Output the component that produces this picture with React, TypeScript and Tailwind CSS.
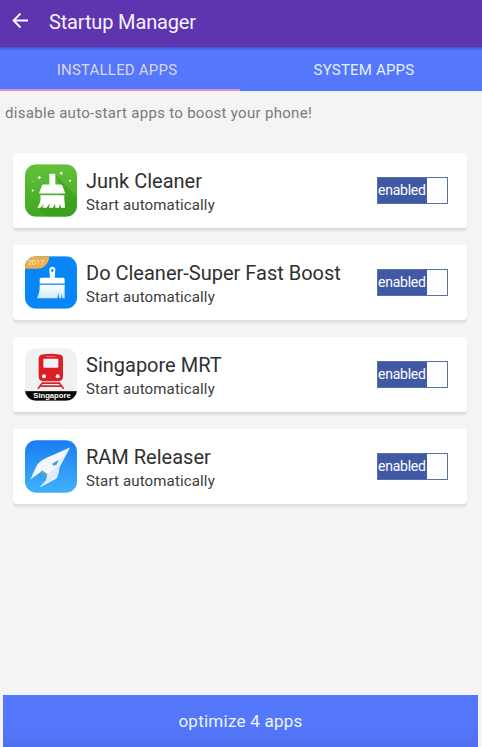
import { useState } from 'react'
import type { ReactNode } from 'react'

interface AppEntry {
  id: string
  name: string
  icon: ReactNode
}

const JunkCleanerIcon = () => (
  <svg viewBox="0 0 156 158" className="mb-px h-[53px] w-13 shrink-0">
    <defs>
      <linearGradient id="junk-bg" x1="0" y1="0" x2="0" y2="1">
        <stop offset="0" stopColor="#65c13a" />
        <stop offset="1" stopColor="#3fa71e" />
      </linearGradient>
      <clipPath id="junk-clip">
        <rect width="156" height="158" rx="34" />
      </clipPath>
    </defs>
    <g clipPath="url(#junk-clip)">
      <rect width="156" height="158" fill="url(#junk-bg)" />
      <path d="M90 31 156 98v60H66L40 131l72-43Z" fill="#2f9018" opacity=".4" />
    </g>
    <g fill="#fff">
      <rect x="73" y="29" width="18" height="35" rx="3" />
      <path d="M56 61h51q5 0 6 5l8 22H42l8-22q1-5 6-5Z" />
      <path d="M46 93h72c-1 13 2 25 2 38h-12l-2-12-4 12H91l-1-12-6 12H72l2-13-9 13H52l5-12-11 12h-9c6-11 12-21 9-38Z" />
      <path d="m43 34 2 4 4 2-4 2-2 4-2-4-4-2 4-2Zm66-13 2 4 4 2-4 2-2 4-2-4-4-2 4-2Z" />
      <circle cx="24" cy="51" r="2" opacity=".6" />
      <circle cx="135" cy="50" r="3" />
      <circle cx="23" cy="79" r="3" />
    </g>
  </svg>
)

const DoCleanerIcon = () => (
  <svg viewBox="0 0 156 158" className="mb-px h-[53px] w-13 shrink-0">
    <defs>
      <linearGradient id="brush-fill" x1="0" y1="0" x2="0" y2="1">
        <stop offset="0" stopColor="#fff" />
        <stop offset="1" stopColor="#cbeafb" />
      </linearGradient>
      <clipPath id="brush-clip">
        <rect width="156" height="158" rx="34" />
      </clipPath>
    </defs>
    <g clipPath="url(#brush-clip)">
      <rect width="156" height="158" fill="#0787f7" />
      <path d="M0 0h73c-2 23-14 37-38 38H0Z" fill="#f0ad49" />
    </g>
    <path
      fillRule="evenodd"
      d="M73 41c0-12 18-12 18 0l-2 24h25q5 0 5 5v12H44V70q0-5 5-5h26ZM82 39a4 4 0 1 0 0 8 4 4 0 0 0 0-8Z"
      fill="#fff"
    />
    <path
      d="M44 86h75v40h-7l-1-13-3 13h-6l-1-16-4 16H36c6-11 9-24 8-40Z"
      fill="url(#brush-fill)"
    />
    <text
      x="9"
      y="28"
      fontSize="22"
      fill="#fdf0d2"
      textLength="49"
      lengthAdjust="spacingAndGlyphs"
      fontFamily="Roboto, sans-serif"
    >
      2017
    </text>
  </svg>
)

const SingaporeMrtIcon = () => (
  <svg viewBox="0 0 156 158" className="mb-px h-[53px] w-13 shrink-0">
    <defs>
      <clipPath id="mrt-clip">
        <rect width="156" height="158" rx="34" />
      </clipPath>
    </defs>
    <g clipPath="url(#mrt-clip)">
      <rect width="156" height="158" fill="#f1f1f1" />
      <rect y="129" width="156" height="29" fill="#050505" />
    </g>
    <path d="M41 30q1-10 12-11 25-5 50 0 10 1 11 11v56q-1 13-13 13H54q-12 0-13-13Z" fill="#da1f26" />
    <path d="M64 25h27" stroke="#e6777b" strokeWidth="3" />
    <rect x="55" y="32" width="45" height="27" rx="3" fill="#f4f4f4" />
    <circle cx="57" cy="84" r="6" fill="#fff" />
    <circle cx="98" cy="84" r="6" fill="#fff" />
    <path d="M52 105h52M48 114h60M54 102l-15 20M101 102l15 20" stroke="#cf2a30" strokeWidth="5" />
    <text
      x="25"
      y="149"
      fontSize="21"
      fontWeight="700"
      fill="#fff"
      textLength="112"
      lengthAdjust="spacingAndGlyphs"
      fontFamily="'Liberation Sans', sans-serif"
    >
      Singapore
    </text>
  </svg>
)

const RamReleaserIcon = () => (
  <svg viewBox="0 0 156 158" className="mb-px h-[53px] w-13 shrink-0">
    <defs>
      <linearGradient id="ram-bg" x1="0" y1="0" x2="0" y2="1">
        <stop offset="0" stopColor="#1a7df0" />
        <stop offset="1" stopColor="#3fb2fb" />
      </linearGradient>
    </defs>
    <rect width="156" height="158" rx="34" fill="url(#ram-bg)" />
    <path d="M135 22 65 53Q42 62 34 79L16 118l33-24 17 13-3 14-20 21 51-27q6-8 9-33Z" fill="#f1f7fd" />
    <path d="M135 22 103 82q-3 25-9 33l-51 27 20-21 5-16 20-19Z" fill="#dfebf8" />
    <path d="m82 71 19-12-6 15-11 3Z" fill="#3a9ee0" />
    <path d="m51 90 17 12-4 7-18-13Z" fill="#6aa5bd" />
  </svg>
)

const ENTRIES: AppEntry[] = [
  { id: 'junk', name: 'Junk Cleaner', icon: <JunkCleanerIcon /> },
  { id: 'do', name: 'Do Cleaner-Super Fast Boost', icon: <DoCleanerIcon /> },
  { id: 'mrt', name: 'Singapore MRT', icon: <SingaporeMrtIcon /> },
  { id: 'ram', name: 'RAM Releaser', icon: <RamReleaserIcon /> },
]

interface AppCardProps {
  entry: AppEntry
  enabled: boolean
  onToggle: () => void
}

const AppCard = ({ entry, enabled, onToggle }: AppCardProps) => (
  <li className="flex h-[75px] items-center rounded-[4px] bg-white pr-[19px] pl-3 shadow-[0_3px_2px_rgba(0,0,0,0.09)]">
    {entry.icon}
    <div className="ml-[9px] min-w-0 flex-1 pt-1">
      <div className="text-[20px] leading-6 whitespace-nowrap text-[#303030]">{entry.name}</div>
      <div className="text-[15px] leading-6 tracking-[0.15px] text-[#3c3c3c]">Start automatically</div>
    </div>
    <button
      onClick={onToggle}
      className="flex h-[27px] w-[71px] shrink-0 border border-[#5870ad] bg-white text-[14px] leading-[25px] tracking-[-0.25px]"
    >
      {enabled ? (
        <span className="h-full w-[49px] bg-[#3f59a5] text-left whitespace-nowrap text-white">enabled</span>
      ) : (
        <span className="ml-auto h-full w-[52px] bg-gray-400 text-center text-white">disabled</span>
      )}
    </button>
  </li>
)

export default function App() {
  const [tab, setTab] = useState<'installed' | 'system'>('installed')
  const [disabled, setDisabled] = useState<string[]>([])

  const toggle = (id: string) =>
    setDisabled((prev) => (prev.includes(id) ? prev.filter((x) => x !== id) : [...prev, id]))

  return (
    <div className="flex h-[747px] w-[482px] flex-col overflow-hidden bg-[#f4f4f4] font-[Roboto,sans-serif]">
      <header className="flex h-[47px] shrink-0 items-center bg-[#5e35ae] pb-[5px] pl-3">
        <button aria-label="Back">
          <svg viewBox="0 0 17 17" className="h-[17px] w-[17px]" fill="none" stroke="#fff" strokeWidth="1.8">
            <path d="M16 7.5H1.5M8.5 0.5 1.5 7.5 8.5 14.5" />
          </svg>
        </button>
        <h1 className="ml-5 pt-0.5 text-[20px] tracking-[-0.15px] text-[#f7f2fc]">Startup Manager</h1>
      </header>

      <nav className="flex h-11 shrink-0 bg-[#5477fb] text-[15px] tracking-[0.2px] shadow-[inset_0_4px_3px_-3px_rgba(50,40,140,0.6)]">
        <button
          onClick={() => setTab('installed')}
          className={`w-[240px] border-b-2 pt-1 pr-1.5 ${tab === 'installed' ? 'border-[#d88fd8] text-[#dcd5ee]' : 'border-transparent text-[#e6f0ff]'}`}
        >
          INSTALLED APPS
        </button>
        <button
          onClick={() => setTab('system')}
          className={`flex-1 border-b-2 pt-1 pl-1.5 ${tab === 'system' ? 'border-[#d88fd8] text-[#dcd5ee]' : 'border-transparent text-[#e6f0ff]'}`}
        >
          SYSTEM APPS
        </button>
      </nav>

      <main className="flex-1">
        <p className="pt-2.5 pl-[5px] text-[15px] leading-6 tracking-[0.3px] text-[#7a7a7a]">
          disable auto-start apps to boost your phone!
        </p>
        <ul className="mt-7 mr-[15px] ml-[13px] flex flex-col gap-[17px]">
          {ENTRIES.map((entry) => (
            <AppCard
              key={entry.id}
              entry={entry}
              enabled={!disabled.includes(entry.id)}
              onToggle={() => toggle(entry.id)}
            />
          ))}
        </ul>
      </main>

      <button className="mr-1 ml-[3px] h-[52px] shrink-0 bg-linear-to-b from-[#5477fb] from-60% to-[#4f6fee] pt-0.5 text-[17px] tracking-[0.25px] text-[#eef3ff]">
        optimize {ENTRIES.length - disabled.length} apps
      </button>
    </div>
  )
}
